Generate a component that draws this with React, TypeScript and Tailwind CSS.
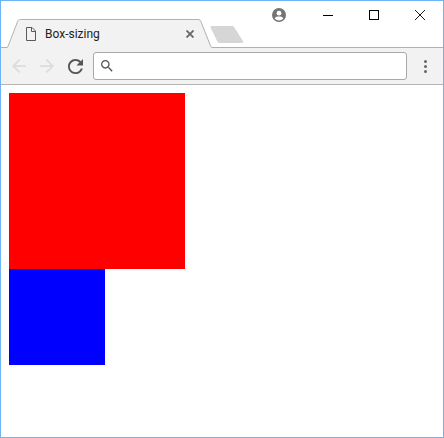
function TabShape() {
  return (
    <svg className="absolute left-0 top-0" width="244" height="47" viewBox="0 0 244 47" fill="none">
      <path d="M6 46.5C7 46.5 7.5 46 8 45L17 20.5C17.4 19.2 18 18.5 19.5 18.5H197C198.5 18.5 199.2 19.2 199.7 20.5L209.5 45C210 46 210.5 46.5 211.5 46.5V47H6Z" fill="#f2f2f2" />
      <path d="M0 46.5H5C6.2 46.5 6.8 46 7.2 45L16.6 20.5C17.1 19.2 18 18.5 19.5 18.5H197C198.5 18.5 199.4 19.2 199.9 20.5L209.6 45C210 46 210.8 46.5 212 46.5" stroke="#b0b0b0" />
      <path d="M209.6 26.7C209.2 25.7 209.8 25 210.8 25H231C232.2 25 232.9 25.5 233.4 26.5L242 40C242.6 41.2 242 42 240.8 42H218.5C217.5 42 216.8 41.5 216.4 40.6Z" fill="#d6d6d6" />
    </svg>
  );
}

function ProfileIcon() {
  return (
    <svg width="14" height="14" viewBox="0 0 14 14">
      <circle cx="7" cy="7" r="7" fill="#757575" />
      <circle cx="7" cy="5.2" r="2.4" fill="#fff" />
      <path d="M2.6 10.2C3.6 8.8 5.2 8.4 7 8.4C8.8 8.4 10.4 8.8 11.4 10.2C10.4 11.6 8.8 12.4 7 12.4C5.2 12.4 3.6 11.6 2.6 10.2Z" fill="#fff" />
    </svg>
  );
}

function FileIcon() {
  return (
    <svg width="10" height="14" viewBox="0 0 10 14" fill="none" stroke="#5a5a5a" strokeWidth="1">
      <path d="M0.5 0.5H6L9.5 4V13.5H0.5Z" />
      <path d="M5.5 0.5V4.5H9.5" />
    </svg>
  );
}

export default function App() {
  return (
    <div className="flex h-[438px] w-[444px] flex-col overflow-hidden border border-[#6cb4f5] bg-white font-['Roboto',sans-serif]">
      <div className="relative h-[47px] shrink-0 border-b border-[#b0b0b0]">
        <TabShape />
        <div className="absolute left-[25px] top-[26px] flex items-center">
          <FileIcon />
          <span className="ml-[9px] text-[12px] leading-[14px] text-[#222]">Box-sizing</span>
        </div>
        <svg className="absolute left-[185px] top-[29px]" width="8" height="8" viewBox="0 0 8 8" stroke="#666" strokeWidth="1.8">
          <path d="M0.5 0.5L7.5 7.5M7.5 0.5L0.5 7.5" />
        </svg>
        <div className="absolute right-0 top-0 flex h-[28px] items-center">
          <div className="mr-[19px]"><ProfileIcon /></div>
          <div className="flex w-[46px] justify-center">
            <svg width="10" height="10" viewBox="0 0 10 10" stroke="#000"><path d="M0 5.5H10" /></svg>
          </div>
          <div className="flex w-[46px] justify-center">
            <svg width="10" height="10" viewBox="0 0 10 10" fill="none" stroke="#000"><rect x="0.5" y="0.5" width="9" height="9" /></svg>
          </div>
          <div className="flex w-[46px] justify-center">
            <svg width="10" height="10" viewBox="0 0 10 10" stroke="#000" strokeWidth="0.9"><path d="M0 0L10 10M10 0L0 10" /></svg>
          </div>
        </div>
      </div>
      <div className="flex h-[37px] shrink-0 items-center border-b border-[#b4b4b4] bg-[#f2f2f2] pl-[11px]">
        <svg width="14" height="14" viewBox="4 4 16 16" fill="#dcdcdc">
          <path d="M20 11H7.83l5.59-5.59L12 4l-8 8 8 8 1.41-1.41L7.83 13H20v-2z" />
        </svg>
        <svg className="ml-[14px]" width="14" height="14" viewBox="4 4 16 16" fill="#dcdcdc">
          <path d="M4 11h12.17l-5.59-5.59L12 4l8 8-8 8-1.41-1.41L16.17 13H4v-2z" />
        </svg>
        <svg className="ml-[14px]" width="15" height="15" viewBox="4 4 16 16" fill="#555">
          <path d="M17.65 6.35C16.2 4.9 14.21 4 12 4c-4.42 0-7.99 3.58-7.99 8s3.57 8 7.99 8c3.73 0 6.84-2.55 7.73-6h-2.08c-.82 2.33-3.04 4-5.65 4-3.31 0-6-2.69-6-6s2.69-6 6-6c1.66 0 3.14.69 4.22 1.78L13 11h7V4l-2.35 2.35z" />
        </svg>
        <div className="ml-[10px] flex h-[28px] w-[314px] items-center rounded-[3px] border border-[#a9a9a9] bg-white pl-[7px]">
          <svg width="12" height="12" viewBox="3 3 18 18" fill="#555">
            <path d="M15.5 14h-.79l-.28-.27C15.41 12.59 16 11.11 16 9.5 16 5.91 13.09 3 9.5 3S3 5.91 3 9.5 5.91 16 9.5 16c1.61 0 3.09-.59 4.23-1.57l.27.28v.79l5 4.99L20.49 19l-4.99-5zm-6 0C7.01 14 5 11.99 5 9.5S7.01 5 9.5 5 14 7.01 14 9.5 11.99 14 9.5 14z" />
          </svg>
        </div>
        <div className="ml-[17px] flex flex-col gap-[2px]">
          <span className="h-[3px] w-[3px] rounded-full bg-[#666]" />
          <span className="h-[3px] w-[3px] rounded-full bg-[#666]" />
          <span className="h-[3px] w-[3px] rounded-full bg-[#666]" />
        </div>
      </div>
      <div className="p-2">
        <div className="h-[176px] w-[176px] bg-[#ff0000]" />
        <div className="h-[96px] w-[96px] bg-[#0000ff]" />
      </div>
    </div>
  );
}
